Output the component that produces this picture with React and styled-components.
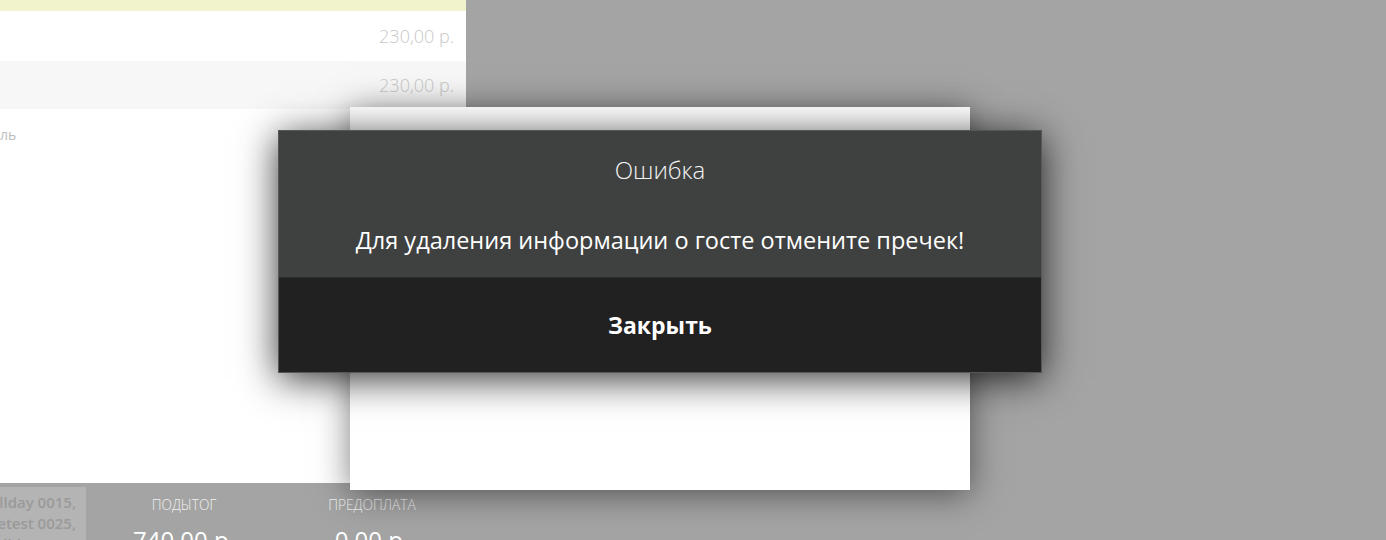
import React from "react";
import styled, { createGlobalStyle } from "styled-components";

const GlobalStyle = createGlobalStyle`
  html, body { margin: 0; padding: 0; }
  body {
    background: #a3a4a3;
    font-family: "Open Sans", "Noto Sans", sans-serif;
    overflow: hidden;
  }
`;

const Screen = styled.div`
  position: relative;
  width: 1386px;
  height: 540px;
  display: grid;
  grid-template-rows: 483px 57px;
  overflow: hidden;
  background: #a3a4a3;
`;

const Main = styled.div`
  display: flex;
`;

const LeftPanel = styled.div`
  width: 466px;
  background: #ffffff;
  display: flex;
  flex-direction: column;
`;

const HighlightRow = styled.div`
  height: 11px;
  background: #f0f3cc;
`;

const ItemRow = styled.div`
  height: ${(p) => p.$h}px;
  background: ${(p) => (p.$alt ? "#f7f7f7" : "#ffffff")};
  display: flex;
  align-items: center;
  justify-content: flex-end;
  padding-right: 12px;
`;

const Price = styled.span`
  font-size: 18px;
  font-weight: 300;
  color: #c8c8c8;
`;

const Note = styled.div`
  padding-top: 16px;
  font-size: 14px;
  color: #bdbdbd;
  line-height: 20px;
`;

const BottomBar = styled.div`
  display: flex;
  background: #a3a4a3;
`;

const GuestBox = styled.div`
  width: 86px;
  margin-top: 4px;
  margin-right: 4px;
  background: #b4b4b4;
  padding: 5px 10px 0 0;
  box-sizing: border-box;
  overflow: hidden;
  display: flex;
  flex-direction: column;
`;

const GuestLine = styled.div`
  display: flex;
  justify-content: flex-end;
  white-space: nowrap;
  font-size: 15px;
  font-weight: 600;
  line-height: 21px;
  color: #9a9a9a;
`;

const Total = styled.div`
  width: 188px;
  display: flex;
  flex-direction: column;
  align-items: center;
  padding-top: 13px;
`;

const TotalLabel = styled.div`
  font-size: 13.7px;
  font-weight: 300;
  color: #f2f2f2;
  line-height: 18px;
`;

const TotalValue = styled.div`
  margin-top: 10px;
  font-size: 24px;
  color: #ffffff;
  line-height: 32px;
`;

const BackDialog = styled.div`
  position: absolute;
  left: 350px;
  top: 107px;
  width: 620px;
  height: 383px;
  background: #ffffff;
  box-shadow: 0 4px 32px rgba(0, 0, 0, 0.5);
`;

const ErrorDialog = styled.div`
  position: absolute;
  left: 278px;
  top: 130px;
  width: 764px;
  box-sizing: border-box;
  border: 1px solid #565857;
  display: flex;
  flex-direction: column;
  background: #3f4140;
  box-shadow: 0 6px 36px rgba(0, 0, 0, 0.8);
`;

const DialogTitle = styled.div`
  height: 72px;
  display: flex;
  align-items: center;
  justify-content: center;
  font-size: 24px;
  font-weight: 300;
  color: #f4f4f4;
  padding-top: 4px;
  box-sizing: border-box;
`;

const DialogMessage = styled.div`
  height: 74px;
  display: flex;
  align-items: center;
  justify-content: center;
  font-size: 23.5px;
  color: #ffffff;
`;

const CloseButton = styled.button`
  height: 95px;
  border: none;
  border-top: 1px solid #2c2c2c;
  background: #212121;
  color: #ffffff;
  font-family: inherit;
  font-size: 23px;
  font-weight: 700;
  cursor: pointer;
  padding: 0;
`;

export default function App() {
  return (
    <>
      <GlobalStyle />
      <Screen>
        <Main>
          <LeftPanel>
            <HighlightRow />
            <ItemRow $h={50}>
              <Price>230,00 р.</Price>
            </ItemRow>
            <ItemRow $h={48} $alt>
              <Price>230,00 р.</Price>
            </ItemRow>
            <Note>ль</Note>
          </LeftPanel>
        </Main>
        <BottomBar>
          <GuestBox>
            <GuestLine>Allday 0015,</GuestLine>
            <GuestLine>Deletest 0025,</GuestLine>
            <GuestLine>Allday 0010</GuestLine>
          </GuestBox>
          <Total>
            <TotalLabel>ПОДЫТОГ</TotalLabel>
            <TotalValue>740,00 р.</TotalValue>
          </Total>
          <Total>
            <TotalLabel>ПРЕДОПЛАТА</TotalLabel>
            <TotalValue>0,00 р.</TotalValue>
          </Total>
        </BottomBar>
        <BackDialog />
        <ErrorDialog>
          <DialogTitle>Ошибка</DialogTitle>
          <DialogMessage>Для удаления информации о госте отмените пречек!</DialogMessage>
          <CloseButton>Закрыть</CloseButton>
        </ErrorDialog>
      </Screen>
    </>
  );
}
